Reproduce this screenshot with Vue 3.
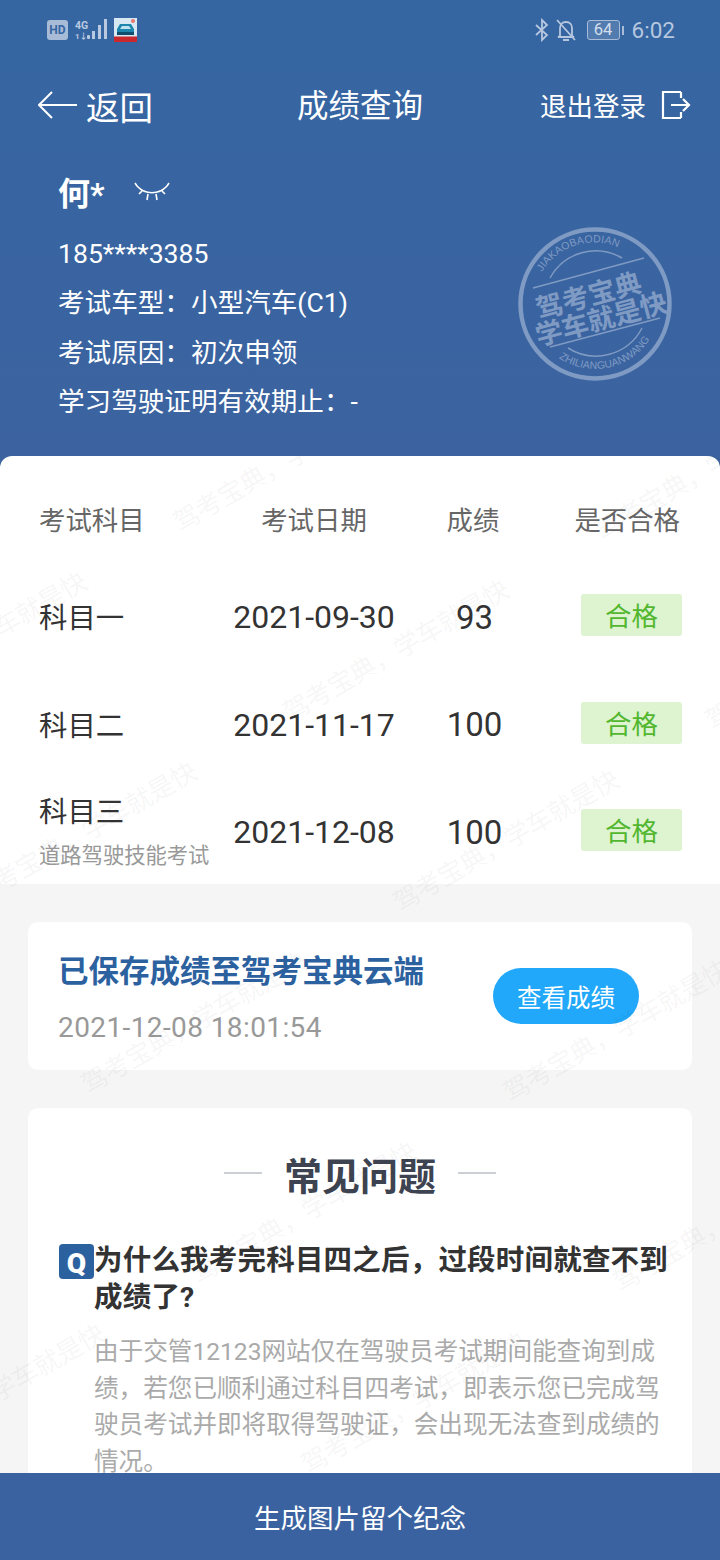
<template>
  <div class="page">
    <header class="top">
      <div class="status">
        <div class="status-left">
          <span class="hd">HD</span>
          <div class="net">
            <span>4G</span>
            <span class="net-sub">1↓</span>
          </div>
          <svg class="bars" width="21" height="22" viewBox="0 0 21 22">
            <rect x="0" y="16" width="3" height="4" rx="1" fill="#b9c9e0" />
            <rect x="5" y="12" width="3" height="8" fill="#b9c9e0" />
            <rect x="11" y="6" width="3" height="14" fill="#b9c9e0" />
            <rect x="17" y="0" width="3" height="20" fill="#b9c9e0" />
          </svg>
          <svg class="app-icon" width="23" height="24" viewBox="0 0 23 24">
            <rect width="23" height="24" fill="#d8e8f2" />
            <path d="M3 11l3-5h11l3 5v6H3z" fill="#1c86ad" />
            <path d="M6 11l2-3h7l2 3z" fill="#bfe0ee" />
            <rect x="3" y="14" width="17" height="3" fill="#0f4f6e" />
            <circle cx="19" cy="3" r="2" fill="#e9756f" />
            <rect y="18.500" width="23" height="5.500" fill="#c9282d" />
          </svg>
        </div>
        <div class="status-right">
          <svg width="16" height="24" viewBox="0 0 16 24" fill="none" stroke="#b6c7df" stroke-width="1.8">
            <path d="M2 7l11 10-5 5V2l5 5L2 17" />
          </svg>
          <svg class="bell" width="20" height="24" viewBox="0 0 20 24" fill="none" stroke="#b6c7df" stroke-width="1.8">
            <path d="M4 18V10c0-3 2-6 6-6s6 3 6 6v8l2 1H2z" />
            <path d="M7 22h6M1 2l18 20" />
          </svg>
          <div class="battery"><span>64</span></div>
          <i class="battery-cap"></i>
          <span class="time">6:02</span>
        </div>
      </div>

      <nav class="nav">
        <div class="back">
          <svg width="39" height="28" viewBox="0 0 39 28" fill="none" stroke="#fff" stroke-width="2">
            <path d="M14 1L1 14l13 13M1 14h38" />
          </svg>
          <span>返回</span>
        </div>
        <div class="nav-title">成绩查询</div>
        <div class="logout">
          <span>退出登录</span>
          <svg width="30" height="30" viewBox="0 0 30 30" fill="none" stroke="#fff" stroke-width="2.2">
            <path d="M20 2H2v26h18M20 2v6M20 22v6" />
            <path d="M10 15h18M22 9l6 6-6 6" />
          </svg>
        </div>
      </nav>

      <div class="info">
        <div class="name">
          <b>何*</b>
          <svg width="36" height="22" viewBox="0 0 36 22" fill="none" stroke="#fff" stroke-width="1.6">
            <path d="M3 5c8 9 22 9 30 0M3 5L1 2M33 5l2-3M8 10l-3 3M28 10l3 3M14 13l-1 6M22 13l1 6" />
          </svg>
        </div>
        <p>185****3385</p>
        <p>考试车型：小型汽车(C1)</p>
        <p>考试原因：初次申领</p>
        <p>学习驾驶证明有效期止：-</p>
      </div>

      <svg class="stamp" width="160" height="160" viewBox="0 0 160 160" fill="none">
        <circle cx="80" cy="80" r="74.5" stroke="#7f9ac3" stroke-width="4.5" />
        <path id="arcTop" d="M27 48A61 61 0 0 1 125 39" />
        <path id="arcBottom" d="M44 134A65 65 0 0 0 142 100" />
        <text class="stamp-small"><textPath href="#arcTop">JIAKAOBAODIAN</textPath></text>
        <text class="stamp-small tight"><textPath href="#arcBottom">ZHILIANGUANWANG</textPath></text>
        <path d="M35 54A52 52 0 0 1 107 34M53 124A52 52 0 0 0 127 104" stroke="#7f9ac3" stroke-width="1.5" />
        <path d="M18 64L129 34M35 123L145 94" stroke="#7f9ac3" stroke-width="1.5" />
        <g transform="rotate(-15 80 80)">
          <text class="stamp-big" x="76" y="80" text-anchor="middle">驾考宝典</text>
          <text class="stamp-big" x="82" y="106" text-anchor="middle">学车就是快</text>
        </g>
      </svg>
    </header>

    <main class="content">
      <section class="result">
        <div class="grid head">
          <span class="left">考试科目</span>
          <span>考试日期</span>
          <span>成绩</span>
          <span class="end head-end">是否合格</span>
        </div>
        <div v-for="row in rows" :key="row.name" class="grid row">
          <div class="left subject" :class="{ 'has-sub': row.sub }">
            <div>{{ row.name }}</div>
            <small v-if="row.sub">{{ row.sub }}</small>
          </div>
          <div class="num">{{ row.date }}</div>
          <div class="num score">{{ row.score }}</div>
          <div class="end"><span class="badge">合格</span></div>
        </div>
      </section>

      <section class="saved">
        <div>
          <div class="saved-title">已保存成绩至驾考宝典云端</div>
          <div class="saved-date">2021-12-08 18:01:54</div>
        </div>
        <button class="view-btn">查看成绩</button>
      </section>

      <section class="faq">
        <div class="faq-title">
          <i></i>
          <span>常见问题</span>
          <i></i>
        </div>
        <div class="question">
          <span class="q-mark">Q</span>
          <div>为什么我考完科目四之后，过段时间就查不到成绩了?</div>
        </div>
        <p class="answer">由于交管12123网站仅在驾驶员考试期间能查询到成绩，若您已顺利通过科目四考试，即表示您已完成驾驶员考试并即将取得驾驶证，会出现无法查到成绩的情况。</p>
      </section>

      <div class="watermark">
        <span v-for="m in marks" :key="m.id" :style="{ left: m.x + 'px', top: m.y + 'px' }">驾考宝典，学车就是快</span>
      </div>
    </main>

    <footer class="bottom">生成图片留个纪念</footer>
  </div>
</template>

<script setup>
const rows = [
  { name: "科目一", date: "2021-09-30", score: "93" },
  { name: "科目二", date: "2021-11-17", score: "100" },
  { name: "科目三", sub: "道路驾驶技能考试", date: "2021-12-08", score: "100" },
];

// watermark repeats on a skewed lattice, origin is relative to the content box
const marks = [];
for (let i = -3; i <= 2; i++) {
  for (let j = -1; j <= 6; j++) {
    marks.push({
      id: `${i}_${j}`,
      x: 182 + i * 422 + j * 110,
      y: 54 + i * 8 + j * 190,
    });
  }
}
</script>

<style>
html,
body {
  margin: 0;
  background: #f5f5f5;
}
</style>

<style scoped>
* {
  box-sizing: border-box;
}
.page {
  width: 720px;
  height: 1560px;
  display: flex;
  flex-direction: column;
  overflow: hidden;
  background: #f5f5f5;
  font-family: Roboto, "Noto Sans CJK SC", sans-serif;
  color: #333;
}
.top {
  position: relative;
  height: 468px;
  flex: none;
  background: linear-gradient(#3566a2, #3c63a0);
  color: #fff;
}
.status {
  height: 60px;
  padding: 0 45px 0 47px;
  display: flex;
  justify-content: space-between;
  align-items: center;
}
.status-left,
.status-right {
  display: flex;
  align-items: center;
}
.hd {
  width: 21px;
  height: 20px;
  border-radius: 3px;
  background: #a9bcd7;
  color: #3566a2;
  font-size: 12px;
  font-weight: 700;
  line-height: 20px;
  text-align: center;
}
.net {
  width: 12px;
  margin-left: 7px;
  display: flex;
  flex-direction: column;
  color: #b9c9e0;
  font-size: 10.5px;
  font-weight: 700;
  line-height: 11px;
  white-space: nowrap;
}
.net-sub {
  margin-top: 2px;
  font-size: 8px;
  line-height: 8px;
}
.app-icon {
  margin-left: 6px;
}
.bell {
  margin-left: 6px;
}
.battery {
  margin-left: 11px;
  width: 33px;
  height: 20px;
  border: 1px solid #a9bcd7;
  border-radius: 3px;
  background: rgba(255, 255, 255, 0.14);
  color: #d4deec;
  font-size: 16.5px;
  line-height: 18px;
  text-align: center;
}
.battery-cap {
  width: 2px;
  height: 9px;
  margin-left: 2px;
  background: #a9bcd7;
}
.time {
  margin-left: 8px;
  color: #b6c7df;
  font-size: 22.5px;
}
.nav {
  height: 90px;
  padding: 0 29px 0 38px;
  display: flex;
  align-items: center;
}
.back {
  width: 259px;
  display: flex;
  align-items: center;
  gap: 9px;
  font-size: 33.5px;
}
.nav-title {
  margin-top: 4px;
  font-size: 31.5px;
  line-height: 40px;
}
.logout {
  margin-left: auto;
  display: flex;
  align-items: center;
  gap: 15px;
  font-size: 26.5px;
}
.logout span {
  margin-top: -2px;
}
.info {
  padding: 20px 0 0 58px;
}
.name {
  height: 48px;
  margin-top: -3px;
  display: flex;
  align-items: center;
  gap: 29px;
}
.name svg {
  margin-top: 2px;
}
.name b {
  font-size: 32px;
}
.info p {
  margin: 0;
  height: 49.3px;
  font-size: 26.6px;
  line-height: 49.3px;
}
.name + p {
  margin-top: 14px;
}
.stamp {
  position: absolute;
  left: 515px;
  top: 224px;
}
.stamp-small {
  fill: #7f9ac3;
  font-family: "Liberation Sans", sans-serif;
  font-size: 10.5px;
  letter-spacing: 0.2px;
}
.tight {
  letter-spacing: 0;
}
.stamp-big {
  fill: #7f9ac3;
  font-size: 27px;
  font-weight: 700;
}
.content {
  position: relative;
  flex: 1;
  min-height: 0;
  margin-top: -12px;
  overflow: hidden;
}
.result {
  height: 428px;
  padding-top: 39px;
  border-radius: 12px 12px 0 0;
  background: #fff;
}
.grid {
  display: grid;
  grid-template-columns: 222px 184px 134px 142px;
  align-items: center;
  text-align: center;
}
.left {
  padding-left: 39px;
  text-align: left;
}
.end {
  text-align: right;
}
.head {
  height: 46px;
  margin-bottom: 22.5px;
  color: #666;
  font-size: 26.4px;
}
.head-end {
  margin-right: 2px;
}
.row {
  height: 107.5px;
}
.subject {
  padding-top: 4px;
  color: #333;
  font-size: 28.4px;
  line-height: 40px;
}
.has-sub {
  padding-top: 8px;
}
.subject small {
  display: block;
  color: #999;
  font-size: 21.3px;
  line-height: 46px;
}
.num {
  font-size: 32px;
  color: #333;
}
.score {
  padding-left: 3px;
  font-size: 33px;
}
.badge {
  display: inline-block;
  width: 101px;
  height: 42px;
  margin-bottom: 4px;
  border-radius: 3px;
  background: #def3d0;
  color: #52b72e;
  font-size: 26.5px;
  line-height: 46px;
  text-align: center;
  vertical-align: middle;
}
.saved {
  height: 148px;
  margin: 38px 28px 0;
  padding: 30px 53px 0 30px;
  display: flex;
  justify-content: space-between;
  border-radius: 10px;
  background: #fff;
}
.saved-title {
  color: #2c619f;
  font-size: 30.5px;
  font-weight: 700;
  line-height: 40px;
}
.saved-date {
  margin-top: 18px;
  color: #999;
  font-size: 28px;
  line-height: 36px;
  letter-spacing: 0.4px;
}
.view-btn {
  width: 146px;
  height: 56px;
  margin-top: 16px;
  padding: 0;
  border: 0;
  border-radius: 28px;
  background: #22a8fa;
  color: #fff;
  font-family: inherit;
  font-size: 24.5px;
}
.faq {
  margin: 38px 28px 0;
  padding: 39px 24px 40px 31px;
  border-radius: 10px;
  background: #fff;
}
.faq-title {
  height: 52px;
  margin-right: 7px;
  display: flex;
  justify-content: center;
  align-items: center;
  gap: 22px;
  color: #3d4350;
  font-size: 38px;
  font-weight: 700;
}
.faq-title i {
  width: 38px;
  height: 2px;
  background: #ccd0d5;
}
.question {
  margin-top: 43px;
  display: flex;
  color: #333;
  font-size: 28.5px;
  font-weight: 700;
  line-height: 37px;
  letter-spacing: 0.2px;
}
.q-mark {
  flex: none;
  width: 35px;
  height: 35px;
  margin-top: 2px;
  border-radius: 4px;
  background: #2c619f;
  color: #fff;
  font-size: 28px;
  font-weight: 900;
  line-height: 40px;
  text-align: center;
}
.answer {
  margin: 18px 0 0 35px;
  color: #aaa;
  font-size: 24.6px;
  line-height: 36.5px;
}
.watermark {
  position: absolute;
  inset: 0;
  pointer-events: none;
}
.watermark span {
  position: absolute;
  color: rgba(0, 0, 0, 0.055);
  font-size: 26px;
  line-height: 1;
  letter-spacing: -0.5px;
  white-space: nowrap;
  transform: rotate(-30deg);
  transform-origin: 0 100%;
}
.bottom {
  position: relative;
  flex: none;
  height: 87px;
  background: #3a62a0;
  color: #fff;
  font-size: 26.5px;
  line-height: 92px;
  text-align: center;
}
</style>
